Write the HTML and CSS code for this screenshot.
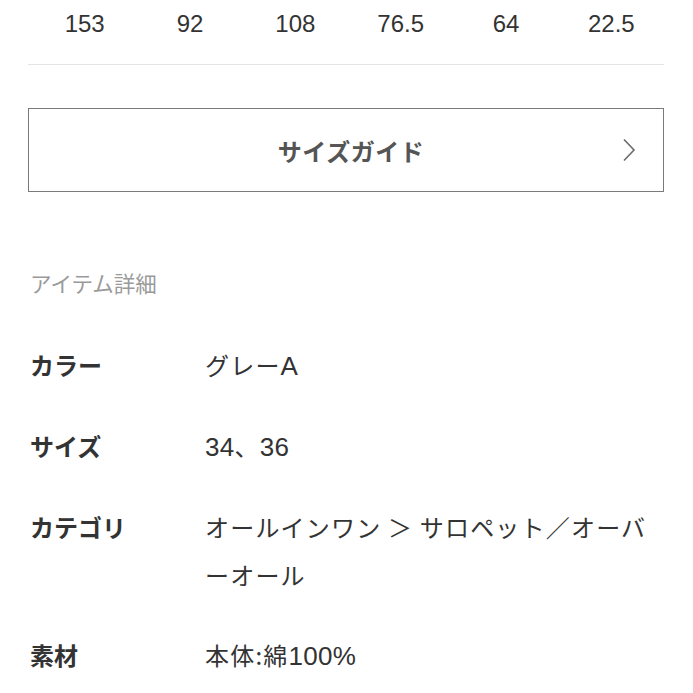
FILE: index.html
```html
<!DOCTYPE html>
<html lang="ja">
<head>
<meta charset="utf-8">
<link rel="stylesheet" href="styles.css">
</head>
<body>
<div class="page">
  <div class="sizes">
    <span>153</span><span>92</span><span>108</span><span>76.5</span><span>64</span><span>22.5</span>
  </div>
  <div class="divider"></div>
  <div class="guide-btn">
    <span class="guide-label">サイズガイド</span>
    <svg class="chev" width="14" height="24" viewBox="0 0 14 24"><path d="M2 1.5 L12 12 L2 22.5" fill="none" stroke="#6a6a6a" stroke-width="1.6"/></svg>
  </div>
  <div class="section-title">アイテム詳細</div>
  <div class="details">
    <div class="row"><div class="label">カラー</div><div class="value">グレー<span class="lat">A</span></div></div>
    <div class="row"><div class="label">サイズ</div><div class="value"><span class="lat">34</span>、<span class="lat">36</span></div></div>
    <div class="row"><div class="label">カテゴリ</div><div class="value">オールインワン ＞ サロペット／オーバーオール</div></div>
    <div class="row"><div class="label">素材</div><div class="value">本体:綿<span class="lat">100%</span></div></div>
  </div>
</div>
</body>
</html>
```
FILE: styles.css
```css
html, body { margin: 0; padding: 0; background: #fff; }
body {
  font-family: "Liberation Sans", "Noto Sans CJK JP", sans-serif;
  color: #333;
}
.page { padding: 0 29px 0 28px; }
.sizes {
  display: grid;
  grid-template-columns: repeat(6, 1fr);
  padding-left: 4px;
  font-size: 24px;
  line-height: 48px;
  color: #333;
  text-align: center;
}
.divider { height: 1px; background: #e4e4e4; margin-top: 16px; }
.guide-btn {
  margin-top: 43px;
  height: 84px;
  box-sizing: border-box;
  border: 1.5px solid #7a7a7a;
  display: flex;
  align-items: center;
  justify-content: center;
  position: relative;
  padding-left: 10px;
}
.guide-label {
  font-family: "Noto Sans CJK JP", sans-serif;
  font-weight: 700;
  font-size: 24px;
  color: #555;
  letter-spacing: 0.5px;
}
.chev { position: absolute; right: 27px; top: 29px; }
.section-title {
  margin-top: 76px;
  padding-left: 2px;
  font-family: "Noto Sans CJK JP", sans-serif;
  font-size: 21.5px;
  line-height: 30px;
  color: #9a9a9a;
}
.details {
  margin-top: 43px;
  padding-left: 2px;
  display: flex;
  flex-direction: column;
  gap: 32px;
}
.row { display: flex; line-height: 48px; font-size: 24px; }
.label {
  width: 175px;
  flex: none;
  font-family: "Noto Sans CJK JP", sans-serif;
  font-weight: 700;
  color: #333;
}
.value {
  flex: 1;
  color: #333;
  padding-right: 4px;
  letter-spacing: 1.2px;
  font-family: "Noto Sans CJK JP", sans-serif;
}
.lat { font-family: "Liberation Sans", sans-serif; font-size: 26px; letter-spacing: 0.3px; }
```
